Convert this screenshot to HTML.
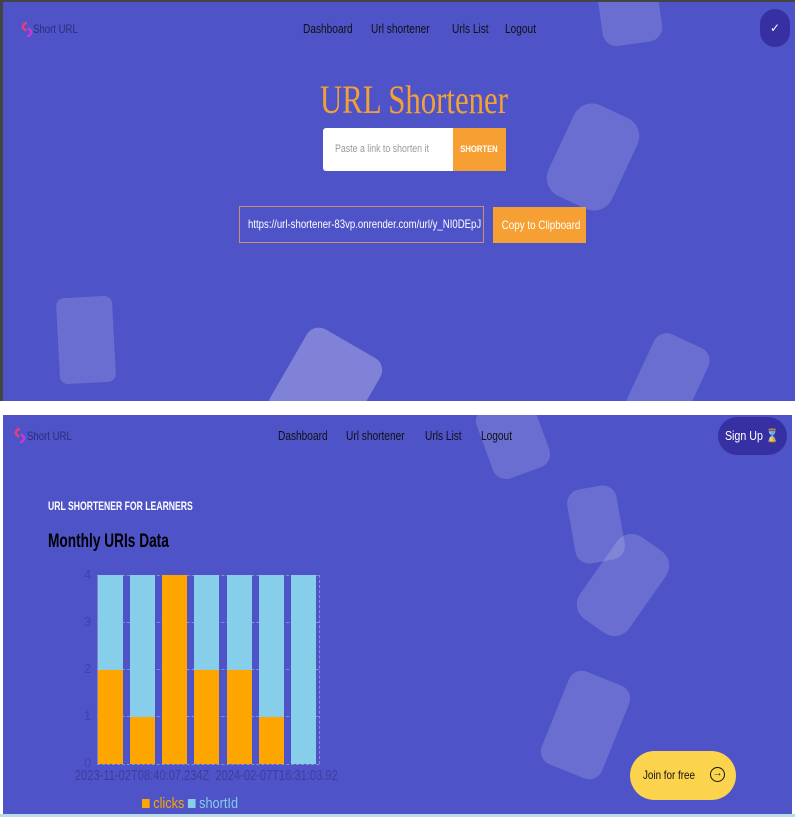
<!DOCTYPE html>
<html><head><meta charset="utf-8"><style>
*{margin:0;padding:0;box-sizing:border-box}
body{width:795px;height:817px;background:#fff;position:relative;overflow:hidden;font-family:"Liberation Sans",sans-serif}
.p{position:absolute;background:#4e53c8;overflow:hidden}
.a{position:absolute;white-space:nowrap}
.sh{position:absolute;background:rgba(255,255,255,.16);border-radius:14px}
.nav{position:absolute;font-size:13px;color:#111;transform:scaleX(.78);transform-origin:left;white-space:nowrap}
.logo{position:absolute;font-size:12px;color:#2a2d7a;transform:scaleX(.8);transform-origin:left;white-space:nowrap}
.gl{position:absolute;left:97px;width:222px;border-top:1px dashed rgba(200,200,220,.5)}
.bar{position:absolute;width:25px}
.o{background:#ffa500}.b{background:#87ceeb}
.s{display:inline-block;transform-origin:left}
</style></head><body>
<div style="position:absolute;left:0;top:0;width:795px;height:3px;background:#444"></div>
<div style="position:absolute;left:0;top:0;width:3px;height:401px;background:#444"></div>
<div class="p" style="left:3px;top:2px;width:792px;height:399px">
  <div class="sh" style="left:597px;top:-20px;width:60px;height:62px;transform:rotate(-8deg)"></div>
  <div class="sh" style="left:555px;top:105px;width:70px;height:100px;transform:rotate(25deg);border-radius:20px"></div>
  <div class="sh" style="left:55px;top:295px;width:56px;height:86px;transform:rotate(-3deg);border-radius:8px"></div>
  <div class="sh" style="left:280px;top:335px;width:85px;height:100px;transform:rotate(30deg);background:rgba(255,255,255,.28)"></div>
  <div class="sh" style="left:635px;top:335px;width:60px;height:90px;transform:rotate(25deg)"></div>
  <svg class="a" style="left:17px;top:19px" width="14" height="17" viewBox="0 0 14 17"><path d="M7 2a4 4 0 0 0-4 5l3 3" stroke="#e2407a" stroke-width="2.5" fill="none"/><path d="M7 15a4 4 0 0 0 4-5l-3-3" stroke="#c23bd0" stroke-width="2.5" fill="none"/></svg>
  <div class="logo" style="left:30px;top:20px">Short URL</div>
  <div class="nav" style="left:300px;top:19px">Dashboard</div>
  <div class="nav" style="left:368px;top:19px">Url shortener</div>
  <div class="nav" style="left:449px;top:19px">Urls List</div>
  <div class="nav" style="left:502px;top:19px">Logout</div>
  <div class="a" style="left:757px;top:7px;width:30px;height:38px;border-radius:15px;background:#3730a3;color:#fff;font-size:12px;text-align:center;line-height:38px">✓</div>
  <div class="a" style="left:0;width:822px;top:74px;text-align:center;font-family:'Liberation Serif',serif;font-size:40px;color:#f4a033;transform:scaleX(.77)">URL Shortener</div>
  <div class="a" style="left:320px;top:126px;width:130px;height:43px;background:#fff;border-radius:3px 0 0 3px;font-size:11px;color:#999;line-height:43px;padding-left:12px"><span class="s" style="transform:scaleX(.8)">Paste a link to shorten it</span></div>
  <div class="a" style="left:450px;top:126px;width:53px;height:43px;background:#f6a033;color:#fff;font-size:9px;font-weight:bold;line-height:43px;text-align:center"><span class="s" style="transform:scaleX(.85);transform-origin:center">SHORTEN</span></div>
  <div class="a" style="left:236px;top:204px;width:245px;height:37px;border:1px solid #c89070;color:#fff;font-size:12px;line-height:35px;padding-left:8px;overflow:hidden"><span class="s" style="transform:scaleX(.8)">https://url-shortener-83vp.onrender.com/url/y_NI0DEpJ</span></div>
  <div class="a" style="left:490px;top:205px;width:93px;height:36px;background:#f6a033;color:#fff;font-size:12px;line-height:36px;text-align:center"><span class="s" style="transform:scaleX(.82);transform-origin:center">Copy to Clipboard</span></div>
</div>
<div class="p" style="left:3px;top:415px;width:789px;height:400px">
  <div class="sh" style="left:480px;top:-15px;width:60px;height:75px;transform:rotate(-20deg)"></div>
  <div class="sh" style="left:568px;top:72px;width:50px;height:75px;transform:rotate(-10deg)"></div>
  <div class="sh" style="left:590px;top:120px;width:60px;height:100px;transform:rotate(35deg);border-radius:18px"></div>
  <div class="sh" style="left:550px;top:260px;width:65px;height:100px;transform:rotate(22deg)"></div>
  <svg class="a" style="left:10px;top:12px" width="14" height="17" viewBox="0 0 14 17"><path d="M7 2a4 4 0 0 0-4 5l3 3" stroke="#e2407a" stroke-width="2.5" fill="none"/><path d="M7 15a4 4 0 0 0 4-5l-3-3" stroke="#c23bd0" stroke-width="2.5" fill="none"/></svg>
  <div class="logo" style="left:24px;top:14px">Short URL</div>
  <div class="nav" style="left:275px;top:13px">Dashboard</div>
  <div class="nav" style="left:343px;top:13px">Url shortener</div>
  <div class="nav" style="left:422px;top:13px">Urls List</div>
  <div class="nav" style="left:478px;top:13px">Logout</div>
  <div class="a" style="left:715px;top:2px;width:69px;height:38px;border-radius:19px;background:#3730a3;color:#fff;font-size:13px;line-height:38px;text-align:center"><span class="s" style="transform:scaleX(.82);transform-origin:center">Sign Up <span style="color:#f4b63a">⌛</span></span></div>
  <div class="a" style="left:45px;top:84px;color:#fff;font-size:12px;font-weight:bold;transform:scaleX(.72);transform-origin:left">URL SHORTENER FOR LEARNERS</div>
  <div class="a" style="left:45px;top:116px;color:#000;font-size:19px;font-weight:bold;transform:scaleX(.72);transform-origin:left">Monthly URIs Data</div>
  <div class="a" style="left:627px;top:336px;width:106px;height:49px;border-radius:25px;background:#fcd34d;color:#111;font-size:12px;line-height:49px;padding-left:13px"><span class="s" style="transform:scaleX(.82)">Join for free</span><span style="position:absolute;left:80px;top:16px;width:15px;height:15px;border:1.5px solid #111;border-radius:50%;line-height:12px;text-align:center;font-size:10px">→</span></div>
</div>
<div class="gl" style="top:575px"></div><div class="gl" style="top:622px"></div><div class="gl" style="top:669px"></div><div class="gl" style="top:716px"></div><div class="gl" style="top:764px"></div>
<div class="a" style="left:319px;top:575px;height:189px;border-left:1px dashed rgba(200,200,220,.5)"></div>
<div class="a" style="left:97px;top:575px;height:189px;border-left:1px solid rgba(160,160,200,.6)"></div>
<div class="a" style="left:84px;top:568px;font-size:13px;color:#3f43a8;line-height:1"><div style="height:47px">4</div><div style="height:47px">3</div><div style="height:47px">2</div><div style="height:47px">1</div><div>0</div></div>
<div class="bar b" style="left:98px;top:575px;height:95px"></div><div class="bar o" style="left:98px;top:670px;height:94px"></div>
<div class="bar b" style="left:130px;top:575px;height:142px"></div><div class="bar o" style="left:130px;top:717px;height:47px"></div>
<div class="bar o" style="left:162px;top:575px;height:189px"></div>
<div class="bar b" style="left:194px;top:575px;height:95px"></div><div class="bar o" style="left:194px;top:670px;height:94px"></div>
<div class="bar b" style="left:227px;top:575px;height:95px"></div><div class="bar o" style="left:227px;top:670px;height:94px"></div>
<div class="bar b" style="left:259px;top:575px;height:142px"></div><div class="bar o" style="left:259px;top:717px;height:47px"></div>
<div class="bar b" style="left:291px;top:575px;height:189px"></div>
<div class="a" style="left:75px;top:767px;font-size:15px;color:#3b3f9e;transform:scaleX(.74);transform-origin:left">2023-11-02T08:40:07.234Z&nbsp; 2024-02-07T16:31:03.92</div>
<div class="a" style="left:142px;top:795px;font-size:15px;transform:scaleX(.85);transform-origin:left"><span style="display:inline-block;width:9px;height:9px;background:#ffa500"></span><span style="color:#ffa500"> clicks </span><span style="display:inline-block;width:9px;height:9px;background:#87ceeb"></span><span style="color:#87ceeb"> shortId</span></div>
<div style="position:absolute;left:0;top:814px;width:795px;height:3px;background:#b8dde8"></div>
</body></html>
